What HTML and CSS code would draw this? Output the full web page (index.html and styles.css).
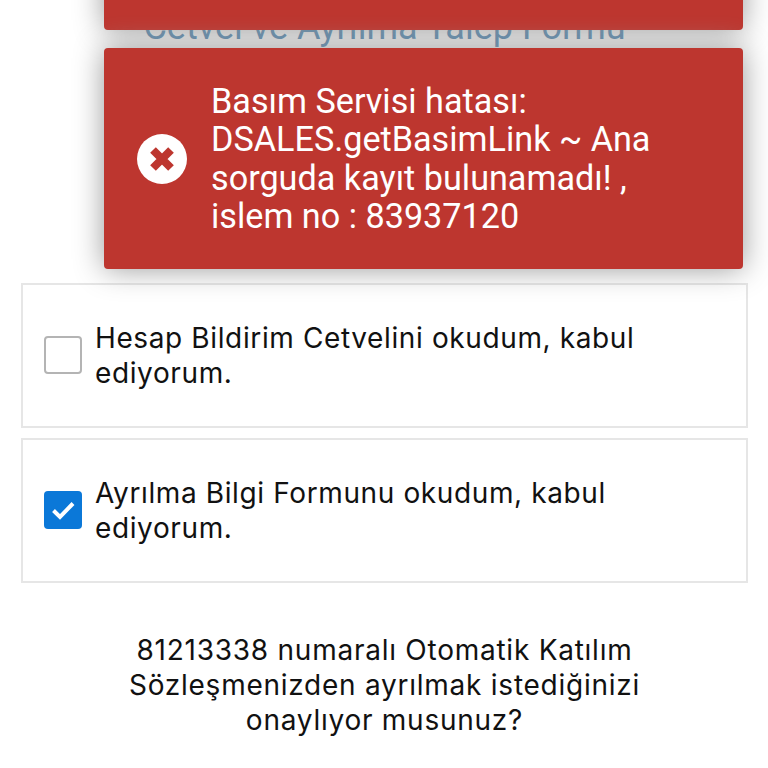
FILE: index.html
```html
<!DOCTYPE html>
<html lang="tr">
<head>
<meta charset="utf-8">
<title>Ayrılma</title>
<link rel="stylesheet" href="styles.css">
</head>
<body>
<main class="page">
  <a class="form-link">Cetvel ve Ayrılma Talep Formu</a>
  <label class="consent">
    <span class="box"></span>
    <span class="consent-text">Hesap Bildirim Cetvelini okudum, kabul ediyorum.</span>
  </label>
  <label class="consent">
    <span class="box box-checked">
      <svg viewBox="0 0 38 38" width="38" height="38" aria-hidden="true"><path d="M9.500 19.500L16 26L29 12.500" fill="none" stroke="#fff" stroke-width="4"/></svg>
    </span>
    <span class="consent-text">Ayrılma Bilgi Formunu okudum, kabul ediyorum.</span>
  </label>
  <p class="question">81213338 numaralı Otomatik Katılım Sözleşmenizden ayrılmak istediğinizi onaylıyor musunuz?</p>
</main>
<div class="toasts">
  <div class="toast toast-first"></div>
  <div class="toast">
    <svg class="toast-icon" viewBox="0 0 50 50" width="50" height="50" aria-hidden="true">
      <circle cx="25" cy="25" r="25" fill="#fff"/>
      <path d="M16 16L34 34M34 16L16 34" stroke="#bd362f" stroke-width="8"/>
    </svg>
    <div class="toast-text">Basım Servisi hatası: DSALES.getBasimLink ~ Ana sorguda kayıt bulunamadı! , islem no : 83937120</div>
  </div>
</div>
</body>
</html>
```
FILE: styles.css
```css
* { box-sizing: border-box; }
html, body { margin: 0; height: 768px; overflow: hidden; background: #fff; }
body { position: relative; font-family: Inter, "Noto Sans", sans-serif; color: #111; }
.page { padding: 6px 20px 0 21px; display: flex; flex-direction: column; }
.form-link {
  display: block; height: 277px; text-align: center; color: #3f7fb0;
  font: 36px/42px Roboto, sans-serif;
}
.consent {
  display: flex; align-items: center; gap: 13px; height: 144.500px;
  padding: 0 60px 0 21px; border: 2px solid #e6e6e6; margin-bottom: 10.500px;
  font-size: 28px; line-height: 35px; letter-spacing: .62px;
}
.consent-text { padding-top: 1px; }
.box {
  flex: none; width: 38px; height: 38px; border: 2px solid #b4b4b4; border-radius: 4px; background: #fff;
}
.box-checked { border: 0; background: #0b78d8; }
.box-checked svg { display: block; }
.question {
  margin: 40px auto 0; width: 620px; text-align: center;
  font-size: 28px; line-height: 35px; letter-spacing: .75px;
}
.toasts {
  position: absolute; left: 104px; top: -150px; width: 639px;
  display: flex; flex-direction: column; gap: 18px;
}
.toast {
  display: flex; align-items: center; gap: 24px; min-height: 221px;
  padding: 15px 40px 15px 33px; background: #bd362f; color: #fff; border-radius: 4px;
  box-shadow: 0 0 30px #999;
}
.toast-first { height: 180px; min-height: 0; }
.toast-icon { flex: none; }
.toast-text { font: 34.200px/38.500px Roboto, sans-serif; }
```
